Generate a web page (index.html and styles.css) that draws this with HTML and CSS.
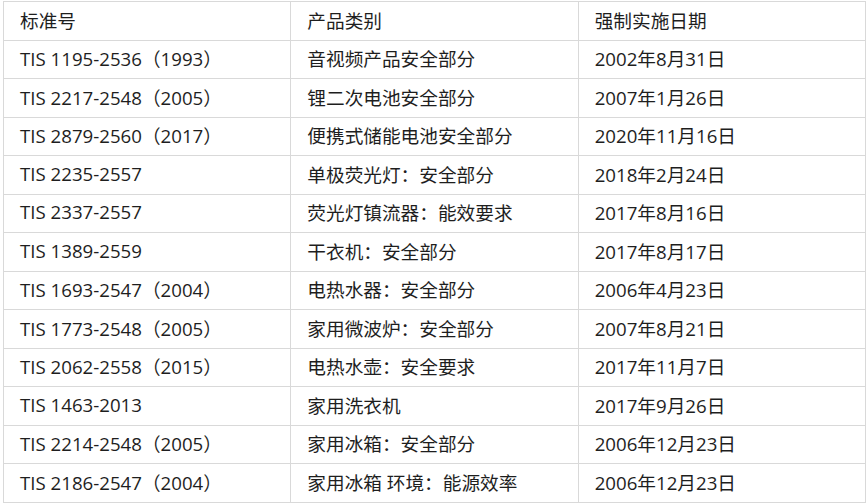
FILE: index.html
```html
<!DOCTYPE html>
<html lang="zh-CN">
<head>
<meta charset="utf-8">
<link rel="stylesheet" href="styles.css">
</head>
<body>
<div class="wrap">
<table class="std-table">
  <thead>
    <tr><th>标准号</th><th>产品类别</th><th>强制实施日期</th></tr>
  </thead>
  <tbody>
    <tr><td>TIS 1195-2536（1993）</td><td>音视频产品安全部分</td><td>2002年8月31日</td></tr>
    <tr><td>TIS 2217-2548（2005）</td><td>锂二次电池安全部分</td><td>2007年1月26日</td></tr>
    <tr><td>TIS 2879-2560（2017）</td><td>便携式储能电池安全部分</td><td>2020年11月16日</td></tr>
    <tr><td>TIS 2235-2557</td><td>单极荧光灯：安全部分</td><td>2018年2月24日</td></tr>
    <tr><td>TIS 2337-2557</td><td>荧光灯镇流器：能效要求</td><td>2017年8月16日</td></tr>
    <tr><td>TIS 1389-2559</td><td>干衣机：安全部分</td><td>2017年8月17日</td></tr>
    <tr><td>TIS 1693-2547（2004）</td><td>电热水器：安全部分</td><td>2006年4月23日</td></tr>
    <tr><td>TIS 1773-2548（2005）</td><td>家用微波炉：安全部分</td><td>2007年8月21日</td></tr>
    <tr><td>TIS 2062-2558（2015）</td><td>电热水壶：安全要求</td><td>2017年11月7日</td></tr>
    <tr><td>TIS 1463-2013</td><td>家用洗衣机</td><td>2017年9月26日</td></tr>
    <tr><td>TIS 2214-2548（2005）</td><td>家用冰箱：安全部分</td><td>2006年12月23日</td></tr>
    <tr><td>TIS 2186-2547（2004）</td><td>家用冰箱 环境：能源效率</td><td>2006年12月23日</td></tr>
  </tbody>
</table>
</div>
</body>
</html>
```
FILE: styles.css
```css
html, body {
  margin: 0;
  padding: 0;
  background: #fff;
}
.wrap {
  padding: 1px 0 0 3px;
}
.std-table {
  border-collapse: collapse;
  table-layout: fixed;
  width: 863px;
  font-family: "Open Sans", "Noto Sans CJK SC", sans-serif;
  font-size: 18.67px;
  color: #1e1e1e;
}
.std-table th,
.std-table td {
  border: 1px solid #d9d9d9;
  height: 38.5px;
  padding: 0 0 3px 16px;
  text-align: left;
  font-weight: normal;
  vertical-align: middle;
  white-space: nowrap;
  box-sizing: border-box;
}
```
